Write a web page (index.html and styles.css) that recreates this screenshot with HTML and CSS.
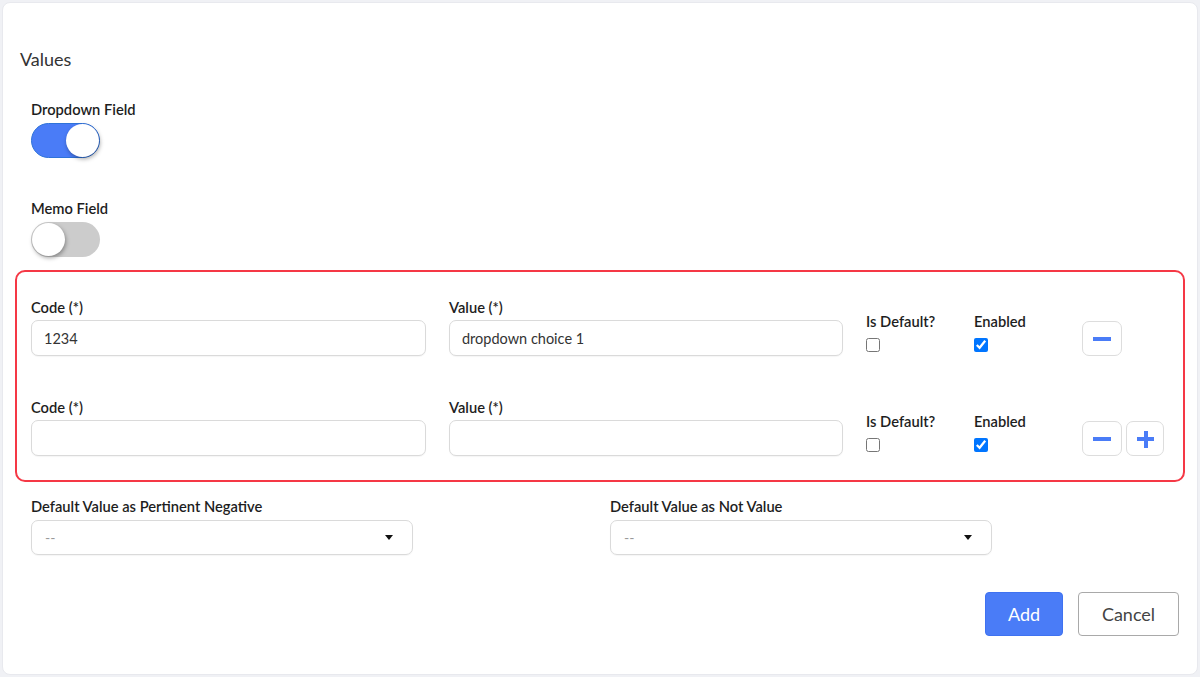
FILE: index.html
```html
<!DOCTYPE html>
<html>
<head>
  <title>Values</title>
  <link rel="stylesheet" href="styles.css">
</head>
<body>
  <div class="card">
    <div class="section-title">Values</div>

    <div class="field-group dropdown-group">
      <div class="field-label">Dropdown Field</div>
      <div class="switch on"><span class="knob"></span></div>
    </div>

    <div class="field-group memo-group">
      <div class="field-label">Memo Field</div>
      <div class="switch"><span class="knob"></span></div>
    </div>

    <div class="choices-box">
      <div class="choice-row">
        <div class="choice-field">
          <label class="field-label">Code (*)</label>
          <input class="text-input" type="text" value="1234">
        </div>
        <div class="choice-field">
          <label class="field-label">Value (*)</label>
          <input class="text-input" type="text" value="dropdown choice 1">
        </div>
        <div class="check-field">
          <label class="field-label">Is Default?</label>
          <input class="check" type="checkbox">
        </div>
        <div class="check-field">
          <label class="field-label">Enabled</label>
          <input class="check" type="checkbox" checked>
        </div>
        <div class="row-actions">
          <button class="icon-button minus-button"><span class="bar-h"></span></button>
        </div>
      </div>

      <div class="choice-row second-row">
        <div class="choice-field">
          <label class="field-label">Code (*)</label>
          <input class="text-input" type="text">
        </div>
        <div class="choice-field">
          <label class="field-label">Value (*)</label>
          <input class="text-input" type="text">
        </div>
        <div class="check-field">
          <label class="field-label">Is Default?</label>
          <input class="check" type="checkbox">
        </div>
        <div class="check-field">
          <label class="field-label">Enabled</label>
          <input class="check" type="checkbox" checked>
        </div>
        <div class="row-actions">
          <button class="icon-button minus-button"><span class="bar-h"></span></button>
          <button class="icon-button plus-button"><span class="bar-h"></span><span class="bar-v"></span></button>
        </div>
      </div>
    </div>

    <div class="defaults-row">
      <div class="default-field">
        <div class="field-label">Default Value as Pertinent Negative</div>
        <div class="select-box">
          <span class="select-text">--</span>
          <span class="caret"></span>
        </div>
      </div>
      <div class="default-field">
        <div class="field-label">Default Value as Not Value</div>
        <div class="select-box">
          <span class="select-text">--</span>
          <span class="caret"></span>
        </div>
      </div>
    </div>

    <div class="form-actions">
      <button class="btn btn-primary">Add</button>
      <button class="btn btn-default">Cancel</button>
    </div>
  </div>
</body>
</html>
```

FILE: styles.css
```css
/* Page */
body {
  margin: 0;
  font-family: Lato, "Liberation Sans", sans-serif;
  background-color: #f0f1f5;
  color: #222;
}
.card {
  margin: 2px;
  height: 673px;
  box-sizing: border-box;
  padding: 46px 12px 0 12px;
  background-color: #fff;
  border: 1px solid #e8e9ee;
  border-radius: 8px;
}
.section-title {
  margin-left: 5px;
  font-size: 18px;
  line-height: 22px;
  margin-top: -1px;
  color: #333;
}

/* Labels and switches */
.field-label {
  display: block;
  font-size: 14.7px;
  line-height: 18px;
  font-weight: 600;
  color: #1e1e1e;
}
.field-group {
  padding-left: 16px;
}
.dropdown-group {
  margin-top: 30px;
}
.memo-group {
  margin-top: 41px;
}
.switch {
  position: relative;
  margin-top: 5px;
  width: 69px;
  height: 35px;
  box-sizing: border-box;
  border-radius: 18px;
  background-color: #cccccc;
}
.switch.on {
  background-color: #4a7cf7;
  border: 1px solid #2f73d9;
}
.knob {
  position: absolute;
  top: 1px;
  left: 1px;
  width: 33px;
  height: 33px;
  border-radius: 50%;
  background-color: #fff;
  box-shadow: 1px 2px 4px rgba(0, 0, 0, 0.35);
}
.switch.on .knob {
  top: 0;
  left: auto;
  right: 0;
}

/* Choices */
.choices-box {
  margin-top: 13px;
  padding: 26px 14px 24px 14px;
  border: 2px solid #f53845;
  border-radius: 10px;
}
.choice-row {
  display: grid;
  grid-template-columns: 395px 394px 85px 85px auto;
  column-gap: 23px;
}
.second-row {
  margin-top: 42px;
}
.choice-field .field-label {
  margin-bottom: 4px;
}
.text-input {
  display: block;
  width: 100%;
  height: 36px;
  box-sizing: border-box;
  padding: 0 12px;
  border: 1px solid #dadada;
  border-radius: 7px;
  box-shadow: 0 1px 1px rgba(0, 0, 0, 0.04);
  font-family: Lato, "Liberation Sans", sans-serif;
  font-size: 14.5px;
  color: #333;
  outline: none;
}
.check-field {
  align-self: end;
  margin-bottom: 4px;
}
.check-field .field-label {
  margin-bottom: 8px;
}
.check {
  display: block;
  width: 14px;
  height: 14px;
  margin: 0;
}
.row-actions {
  align-self: end;
  display: flex;
  gap: 4px;
}
.icon-button {
  position: relative;
  width: 40px;
  height: 35px;
  padding: 0;
  background-color: #fff;
  border: 1px solid #dddddd;
  border-radius: 7px;
}
.plus-button {
  width: 38px;
}
.bar-h {
  position: absolute;
  left: 50%;
  top: 50%;
  width: 18px;
  height: 4px;
  margin: -2px 0 0 -9px;
  background-color: #4a7cf7;
}
.plus-button .bar-h {
  width: 17px;
  margin-left: -8px;
}
.bar-v {
  position: absolute;
  left: 50%;
  top: 50%;
  width: 4px;
  height: 17px;
  margin: -8px 0 0 -1px;
  background-color: #4a7cf7;
}

/* Default selects */
.defaults-row {
  display: grid;
  grid-template-columns: 579px 579px;
  margin-top: 15px;
  padding-left: 16px;
}
.select-box {
  display: flex;
  align-items: center;
  justify-content: space-between;
  margin-top: 5px;
  width: 382px;
  height: 35px;
  box-sizing: border-box;
  padding: 0 19px 0 13px;
  border: 1px solid #dadada;
  border-radius: 7px;
  box-shadow: 0 1px 1px rgba(0, 0, 0, 0.04);
}
.select-text {
  font-size: 14px;
  color: #999;
}
.caret {
  width: 0;
  height: 0;
  border-left: 4px solid transparent;
  border-right: 4px solid transparent;
  border-top: 5px solid #111;
}

/* Footer buttons */
.form-actions {
  display: flex;
  justify-content: flex-end;
  gap: 15px;
  margin-top: 37px;
  margin-right: 6px;
}
.btn {
  height: 44px;
  box-sizing: border-box;
  font-family: Lato, "Liberation Sans", sans-serif;
  font-size: 18px;
  border-radius: 4px;
  cursor: pointer;
}
.btn-primary {
  width: 78px;
  background-color: #4a7cf7;
  border: 1px solid #3f72f0;
  color: #fff;
}
.btn-default {
  width: 101px;
  background-color: #fff;
  border: 1px solid #a9a9a9;
  color: #444;
}
```
